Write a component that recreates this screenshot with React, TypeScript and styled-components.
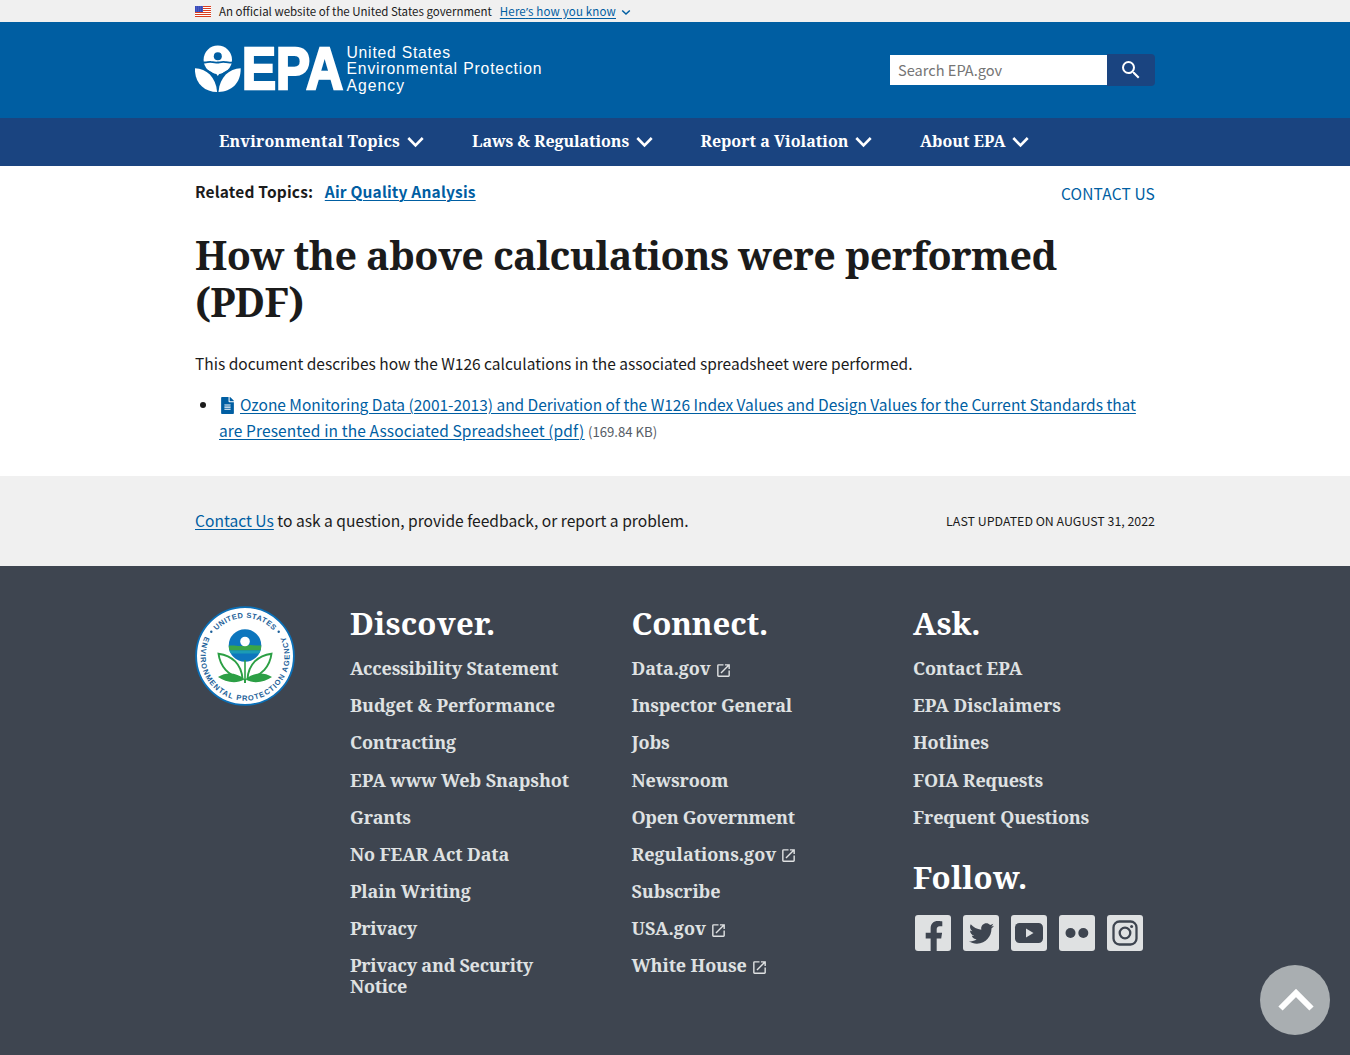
import React from "react";
import styled, { createGlobalStyle } from "styled-components";
import { FaFacebookF, FaFileAlt, FaTwitter } from "react-icons/fa";
import { MdOpenInNew, MdSearch } from "react-icons/md";

const sans = `"Source Sans Pro", "Noto Sans CJK SC", "Noto Sans", sans-serif`;
const serif = `"Noto Serif", "DejaVu Serif Condensed", "DejaVu Serif", serif`;
const link = "#005ea2";

const GlobalStyle = createGlobalStyle`
  * { box-sizing: border-box; }
  body { margin: 0; background: #fff; color: #1b1b1b; font-family: ${sans}; font-size: 15.5px; line-height: 26px; overflow: hidden; }
  a { color: inherit; text-decoration: none; }
  ul { list-style: none; margin: 0; padding: 0; }
  h1, h2, p { margin: 0; }
`;

const Page = styled.div`
  height: 1055px;
  display: flex;
  flex-direction: column;
  overflow: hidden;
`;

const Container = styled.div`
  width: 960px;
  margin: 0 auto;
  display: flex;
`;

const Banner = styled.div`
  flex: none;
  height: 22px;
  background: #f0f0f0;
  font-size: 11.5px;
  line-height: 20px;
`;
const BannerRow = styled(Container)`
  height: 22px;
  align-items: center;
  gap: 8px;
`;
const BannerText = styled.span`
  padding-bottom: 1px;
`;
const BannerLink = styled.a`
  color: ${link};
  letter-spacing: 0.16px;
  text-decoration: underline;
  text-underline-offset: 1.5px;
`;
const Apostrophe = styled.span`
  font-family: "Noto Sans", sans-serif;
`;
const SmallChevron = styled.svg`
  margin: 2px 0 0 -3px;
`;

const Header = styled.header`
  flex: none;
  height: 96px;
  background: #005ea2;
`;
const HeaderRow = styled(Container)`
  justify-content: space-between;
  align-items: flex-start;
`;
const LogoSvg = styled.svg`
  display: block;
  margin-top: 10px;
`;
const SearchForm = styled.form`
  display: flex;
  margin-top: 32px;
  height: 32px;
`;
const SearchInput = styled.input`
  width: 217px;
  height: 30px;
  margin: 1px 0;
  border: 0;
  border-radius: 0;
  padding: 0 8px 2px;
  background: #fff;
  font-family: ${sans};
  font-size: 14.6px;
  &::placeholder { color: #757575; opacity: 1; }
`;
const SearchButton = styled.button`
  width: 48px;
  height: 32px;
  border: 0;
  padding: 0;
  border-radius: 0 4px 4px 0;
  background: #1a4480;
  color: #fff;
  display: flex;
  align-items: center;
  justify-content: center;
`;

const Nav = styled.nav`
  flex: none;
  height: 48px;
  background: #1a4480;
`;
const NavRow = styled(Container)`
  padding-left: 24px;
  height: 48px;
  gap: 48px;
  align-items: center;
`;
const NavItem = styled.a<{ $w: number; $ls: number }>`
  width: ${(p) => p.$w}px;
  display: flex;
  align-items: center;
  justify-content: space-between;
  white-space: nowrap;
  color: #fff;
  font: 700 16px/22px ${serif};
  letter-spacing: ${(p) => p.$ls}px;
  padding-bottom: 2px;
`;
const ChevronSvg = styled.svg`
  margin-top: 2px;
`;

const Main = styled.main`
  flex: none;
  height: 310px;
`;
const TopicsRow = styled(Container)`
  justify-content: space-between;
  padding-top: 12px;
  height: 66px;
`;
const Related = styled.div`
  display: flex;
  gap: 11.5px;
  font-weight: 700;
  letter-spacing: 0.18px;
`;
const TextLink = styled.a<{ $ls?: number }>`
  color: ${link};
  letter-spacing: ${(p) => (p.$ls === undefined ? "inherit" : `${p.$ls}px`)};
  text-decoration: underline;
  text-underline-offset: 1.5px;
  text-decoration-thickness: 1px;
`;
const ContactLink = styled.a`
  color: ${link};
  padding-top: 2px;
  letter-spacing: 0.15px;
`;
const Article = styled(Container)`
  flex-direction: column;
`;
const Title = styled.h1`
  font: 700 39.5px/47px ${serif};
  letter-spacing: -0.6px;
  height: 94px;
`;
const Intro = styled.p`
  margin-top: 24px;
`;
const FileList = styled.ul`
  margin-top: 15px;
  padding-left: 24px;
  list-style: disc;
`;
const FileIcon = styled(FaFileAlt)`
  color: ${link};
  width: 13px;
  height: 17px;
  margin: 0 6px 0 2px;
  vertical-align: -3px;
`;
const Size = styled.span`
  color: #565c65;
  font-size: 13.2px;
`;

const Feedback = styled.section`
  flex: none;
  height: 90px;
  background: #f0f0f0;
`;
const FeedbackRow = styled(Container)`
  height: 88px;
  align-items: center;
  justify-content: space-between;
`;
const Question = styled.p`
  font-size: 15.6px;
  padding-bottom: 1px;
`;
const Updated = styled.span`
  font-size: 12.4px;
  padding-top: 2px;
`;

const Footer = styled.footer`
  flex: 1;
  background: #3e4550;
  color: #dfe1e2;
`;
const FooterRow = styled(Container)`
  padding-top: 39px;
`;
const SealSvg = styled.svg`
  flex: none;
  margin: 1px 53px 0 -2px;
`;
const Column = styled.div`
  flex: none;
  width: 281.5px;
`;
const ColumnTitle = styled.h2<{ $ls: number }>`
  color: #fff;
  font: 700 31.2px/36px ${serif};
  letter-spacing: ${(p) => p.$ls}px;
`;
const LinkList = styled.ul`
  margin-top: 17.1px;
  display: flex;
  flex-direction: column;
  gap: 16.15px;
`;
const LinkItem = styled.li<{ $ls: number }>`
  font: 700 18px/21px ${serif};
  letter-spacing: ${(p) => p.$ls}px;
  max-width: 232px;
  white-space: pre-line;
`;
const ExternalIcon = styled(MdOpenInNew)`
  width: 17px;
  height: 17px;
  margin-left: 4px;
  vertical-align: -3.5px;
`;
const FollowTitle = styled(ColumnTitle)`
  margin-top: 31.8px;
`;
const SocialRow = styled.div`
  display: flex;
  gap: 12px;
  padding: 20px 0 0 2px;
`;
const SocialBox = styled.a`
  width: 36px;
  height: 36px;
  border-radius: 3px;
  background: #dfe1e2;
  color: #3e4550;
  display: flex;
  align-items: center;
  justify-content: center;
  overflow: hidden;
`;
const FacebookIcon = styled(FaFacebookF)`
  width: 20px;
  height: 31px;
  margin: 6px 0 0 2px;
`;
const BackToTop = styled.a`
  position: fixed;
  right: 20px;
  bottom: 20px;
  width: 70px;
  height: 70px;
  border-radius: 50%;
  background: #a9aeb1;
`;

const Flag = () => (
  <svg width="16" height="11" viewBox="0 0 16 11">
    <rect width="16" height="11" fill="#fff" />
    {[0, 2, 4, 6, 8, 10].map((y) => (
      <rect key={y} y={y} width="16" height="1" fill="#db3e1f" />
    ))}
    <rect width="8" height="6" fill="#1e33b1" />
    {[1, 3, 5].map((y) =>
      [1, 3, 5, 7].map((x) => <rect key={`${x}-${y}`} x={x - 0.3} y={y - 0.4} width=".8" height=".8" fill="#fff" />)
    )}
  </svg>
);

const NavChevron = () => (
  <ChevronSvg width="17" height="12" viewBox="0 0 17 12" fill="none" stroke="#fff" strokeWidth="2.6">
    <path d="M1.3 2 8.5 9.4 15.7 2" />
  </ChevronSvg>
);

const Logo = () => (
  <LogoSvg width="360" height="76" viewBox="195 32 360 76" fill="#fff">
    <circle cx="217.8" cy="59.7" r="14.2" />
    <circle cx="217.8" cy="56.2" r="4" fill="#005ea2" />
    <path d="M203 62.3c3 .8 5-.6 7.5-.4s4 1 7.3.6 5-.8 7.5-.4 4 .8 7.5.2" fill="none" stroke="#005ea2" strokeWidth="1.8" />
    <path d="M201 68.5c8 .5 14.5 5 16.8 11.5 2.300-6.500 8.800-11 16.800-11.500v8h-33.600Z" fill="#005ea2" />
    <path d="M207.500 67.500h20.600c-4.300 1.800-8 4.800-10.300 8.500-2.300-3.700-6-6.700-10.300-8.500Z" />
    <path d="M194.900 68.300c11.400.4 21 8.500 22.200 23.700-12.700-.5-22.400-8.400-22.200-23.700Z" />
    <path d="M240.700 68.300c-11.400.4-21 8.500-22.200 23.700 12.700-.5 22.400-8.400 22.200-23.700Z" />
    <text x="242" y="89" fontFamily="Liberation Sans, Arial, sans-serif" fontWeight="700" fontSize="58.500" textLength="101" lengthAdjust="spacingAndGlyphs" stroke="#fff" strokeWidth="2.600">EPA</text>
    <g fontFamily="Liberation Sans, Arial, sans-serif" fontSize="15.700">
      <text x="346.500" y="57.800" textLength="103.500">United States</text>
      <text x="346.500" y="74" textLength="195">Environmental Protection</text>
      <text x="346.500" y="91.200" textLength="57.500">Agency</text>
    </g>
  </LogoSvg>
);

const Seal = () => (
  <SealSvg width="104" height="104" viewBox="0 0 104 104">
    <defs>
      <path id="seal-top" d="M13.900 50A38.100 38.100 0 0 1 90.100 50" />
      <path id="seal-bottom" d="M13.300 28.200A44.500 44.500 0 1 0 90.700 28.200" />
      <clipPath id="globe"><circle cx="52" cy="39.500" r="16.300" /></clipPath>
    </defs>
    <circle cx="52" cy="50" r="48.900" fill="#fff" stroke="#0b70b8" strokeWidth="1.800" />
    <g fontFamily="Liberation Sans, Arial, sans-serif" fontWeight="700" fontSize="7.500" fill="#1d5f99">
      <text><textPath href="#seal-top" startOffset="50%" textAnchor="middle" textLength="64">UNITED STATES</textPath></text>
      <text><textPath href="#seal-bottom" startOffset="50%" textAnchor="middle" textLength="180">ENVIRONMENTAL PROTECTION AGENCY</textPath></text>
    </g>
    <circle cx="18.300" cy="25.800" r="1.200" fill="#1d5f99" />
    <circle cx="85.700" cy="25.800" r="1.200" fill="#1d5f99" />
    <g clipPath="url(#globe)">
      <rect x="35" y="22" width="34" height="36" fill="#0d76bd" />
      <path d="M35 40c6-1.500 10 1 17-.5s10 .5 17 0v5H35Z" fill="#3aa548" />
      <path d="M35 44.500h34v3H35Z" fill="#1b9bb5" />
    </g>
    <circle cx="52" cy="35.500" r="4.800" fill="#fff" />
    <g fill="#fff" stroke="#2c9f45" strokeWidth="1.900">
      <path d="M49.500 73C35 70 27 60 25.500 47.700 39 49.500 48.500 58 49.500 73Z" />
      <path d="M54.500 73C69 70 77 60 78.500 47.700 65 49.500 55.500 58 54.500 73Z" />
    </g>
    <path d="M25 71c9-5.500 19-4 26.200 2V54h1.600v19c7.200-6 17.200-7.500 26.200-2-7 5-18 7.500-26 2.500V77h-2v-3.500c-8 5-19 2.500-26-2.500Z" fill="#2c9f45" />
  </SealSvg>
);

const YouTube = () => (
  <svg width="30" height="22" viewBox="0 0 30 22">
    <rect x="1" y="1" width="28" height="20" rx="4.500" fill="currentColor" />
    <path d="M12 6.500v9L19.500 11Z" fill="#dfe1e2" />
  </svg>
);
const Flickr = () => (
  <svg width="24" height="12" viewBox="0 0 24 12" fill="currentColor">
    <circle cx="5.500" cy="6" r="5" />
    <circle cx="18.300" cy="6" r="5" />
  </svg>
);
const Instagram = () => (
  <svg width="26" height="26" viewBox="0 0 26 26" fill="none" stroke="currentColor" strokeWidth="2.300">
    <rect x="1.500" y="1.500" width="23" height="23" rx="6" />
    <circle cx="13" cy="13" r="5.300" />
    <circle cx="19.600" cy="6.400" r="1.500" fill="currentColor" stroke="none" />
  </svg>
);

type Item = { label: string; ls?: number; external?: boolean };

const discover: Item[] = [
  { label: "Accessibility Statement", ls: -0.2 },
  { label: "Budget & Performance", ls: -0.08 },
  { label: "Contracting" },
  { label: "EPA www Web Snapshot", ls: -0.05 },
  { label: "Grants" },
  { label: "No FEAR Act Data" },
  { label: "Plain Writing" },
  { label: "Privacy", ls: -0.3 },
  { label: "Privacy and Security\nNotice", ls: -0.27 },
];
const connect: Item[] = [
  { label: "Data.gov", external: true },
  { label: "Inspector General", ls: -0.23 },
  { label: "Jobs" },
  { label: "Newsroom" },
  { label: "Open Government", ls: -0.3 },
  { label: "Regulations.gov", ls: -0.03, external: true },
  { label: "Subscribe" },
  { label: "USA.gov", ls: 0, external: true },
  { label: "White House", external: true },
];
const ask: Item[] = [
  { label: "Contact EPA" },
  { label: "EPA Disclaimers", ls: -0.03 },
  { label: "Hotlines" },
  { label: "FOIA Requests", ls: -0.2 },
  { label: "Frequent Questions", ls: -0.18 },
];

const Links = ({ items }: { items: Item[] }) => (
  <LinkList>
    {items.map((i) => (
      <LinkItem key={i.label} $ls={i.ls ?? -0.13}>
        <a href="#">{i.label}</a>
        {i.external && <ExternalIcon />}
      </LinkItem>
    ))}
  </LinkList>
);

export default function App() {
  return (
    <Page>
      <GlobalStyle />
      <Banner>
        <BannerRow>
          <Flag />
          <BannerText>An official website of the United States government</BannerText>
          <BannerLink href="#">Here<Apostrophe>’</Apostrophe>s how you know</BannerLink>
          <SmallChevron width="10" height="8" viewBox="0 0 10 8" fill="none" stroke={link} strokeWidth="1.500">
            <path d="M1.200 2.500 5 6 8.800 2.500" />
          </SmallChevron>
        </BannerRow>
      </Banner>
      <Header>
        <HeaderRow>
          <Logo />
          <SearchForm>
            <SearchInput placeholder="Search EPA.gov" />
            <SearchButton type="button"><MdSearch size={24} /></SearchButton>
          </SearchForm>
        </HeaderRow>
      </Header>
      <Nav>
        <NavRow>
          <NavItem href="#" $w={205} $ls={0.12}>Environmental Topics<NavChevron /></NavItem>
          <NavItem href="#" $w={180.5} $ls={-0.07}>Laws &amp; Regulations<NavChevron /></NavItem>
          <NavItem href="#" $w={171.5} $ls={0}>Report a Violation<NavChevron /></NavItem>
          <NavItem href="#" $w={109} $ls={0}>About EPA<NavChevron /></NavItem>
        </NavRow>
      </Nav>
      <Main>
        <TopicsRow>
          <Related>
            <span>Related Topics:</span>
            <TextLink href="#">Air Quality Analysis</TextLink>
          </Related>
          <ContactLink href="#">CONTACT US</ContactLink>
        </TopicsRow>
        <Article>
          <Title>How the above calculations were performed (PDF)</Title>
          <Intro>This document describes how the W126 calculations in the associated spreadsheet were performed.</Intro>
          <FileList>
            <li>
              <FileIcon />
              <TextLink href="#" $ls={-0.02}>
                Ozone Monitoring Data (2001-2013) and Derivation of the W126 Index Values and Design Values for the Current Standards that{" "}
                <TextLink as="span" $ls={0.12}>are Presented in the Associated Spreadsheet (pdf)</TextLink>
              </TextLink>{" "}
              <Size>(169.84 KB)</Size>
            </li>
          </FileList>
        </Article>
      </Main>
      <Feedback>
        <FeedbackRow>
          <Question><TextLink href="#">Contact Us</TextLink> to ask a question, provide feedback, or report a problem.</Question>
          <Updated>LAST UPDATED ON AUGUST 31, 2022</Updated>
        </FeedbackRow>
      </Feedback>
      <Footer>
        <FooterRow>
          <Seal />
          <Column>
            <ColumnTitle $ls={0.25}>Discover.</ColumnTitle>
            <Links items={discover} />
          </Column>
          <Column>
            <ColumnTitle $ls={-0.15}>Connect.</ColumnTitle>
            <Links items={connect} />
          </Column>
          <Column>
            <ColumnTitle $ls={0}>Ask.</ColumnTitle>
            <Links items={ask} />
            <FollowTitle $ls={0.35}>Follow.</FollowTitle>
            <SocialRow>
              <SocialBox href="#"><FacebookIcon /></SocialBox>
              <SocialBox href="#"><FaTwitter size={25} /></SocialBox>
              <SocialBox href="#"><YouTube /></SocialBox>
              <SocialBox href="#"><Flickr /></SocialBox>
              <SocialBox href="#"><Instagram /></SocialBox>
            </SocialRow>
          </Column>
        </FooterRow>
      </Footer>
      <BackToTop href="#">
        <svg width="70" height="70" viewBox="0 0 70 70" fill="none" stroke="#fff" strokeWidth="6">
          <path d="M20.500 43.500 36 28 51.500 43.500" />
        </svg>
      </BackToTop>
    </Page>
  );
}
